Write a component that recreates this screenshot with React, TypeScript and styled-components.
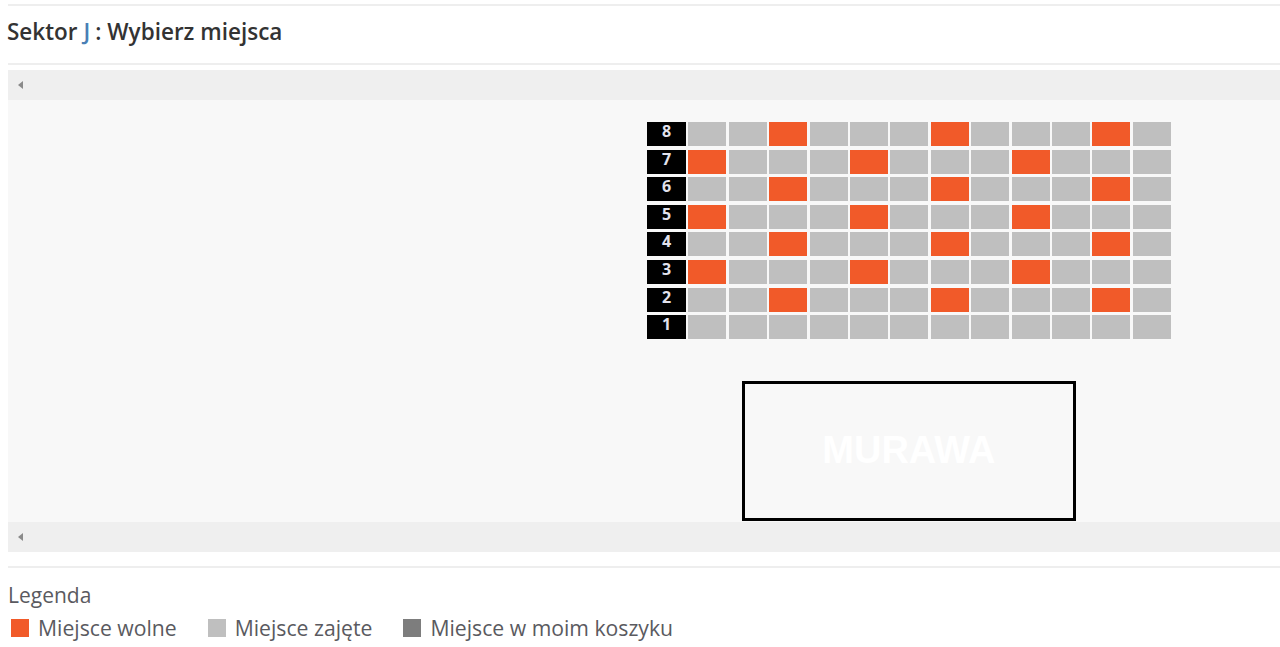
import React from "react";
import styled, { createGlobalStyle } from "styled-components";

const GlobalStyle = createGlobalStyle`
  html, body {
    margin: 0;
    padding: 0;
    background: #ffffff;
    font-family: "Open Sans", "Liberation Sans", sans-serif;
    overflow: hidden;
  }
`;

type SeatKind = "free" | "taken" | "mine";

const seatColors: Record<SeatKind, string> = {
  free: "#f15a29",
  taken: "#bfbfbf",
  mine: "#7d7d7d",
};

const Page = styled.div`
  padding: 4px 0 0 8px;
  width: 1272px;
`;

const Rule = styled.div<{ $gap?: number }>`
  height: 2px;
  background: #eeeeee;
  margin-top: ${(p) => p.$gap ?? 0}px;
`;

const Title = styled.h2`
  margin: 0 0 0 -1px;
  height: 57px;
  box-sizing: border-box;
  padding-bottom: 7px;
  display: flex;
  align-items: center;
  font-size: 22.5px;
  font-weight: 600;
  color: #333333;
`;

const Accent = styled.span`
  color: #4a7fb5;
  margin: 0 5px 0 6px;
`;

const Frame = styled.div`
  margin-top: 5px;
  display: flex;
  flex-direction: column;
`;

const ScrollBar = styled.div`
  height: 30px;
  background: #efefef;
  display: flex;
  align-items: center;
  padding-left: 10px;
`;

const Arrow = styled.span`
  width: 0;
  height: 0;
  border-top: 4px solid transparent;
  border-bottom: 4px solid transparent;
  border-right: 5px solid #8a8a8a;
`;

const Canvas = styled.div`
  height: 422px;
  background: #f8f8f8;
  padding: 22px 0 0 639px;
  box-sizing: border-box;
  overflow: hidden;
`;

const Stage = styled.div`
  display: flex;
  width: fit-content;
  flex-direction: column;
  align-items: center;
`;

const SeatGrid = styled.div`
  display: grid;
  grid-template-columns: 39px repeat(12, 38px);
  grid-auto-rows: 24px;
  column-gap: 2.4px;
  row-gap: 3.6px;
`;

const RowLabel = styled.div`
  background: #000000;
  color: #e2e2ec;
  font-family: "Open Sans", "Liberation Sans", sans-serif;
  font-weight: 700;
  font-size: 16px;
  line-height: 18px;
  text-align: center;
`;

const Seat = styled.div<{ $kind: SeatKind }>`
  background: ${(p) => seatColors[p.$kind]};
`;

const Pitch = styled.div`
  margin-top: 42px;
  width: 334px;
  height: 140px;
  box-sizing: border-box;
  border: 3px solid #000000;
  display: flex;
  align-items: center;
  justify-content: center;
  font-family: "Liberation Sans", Arial, sans-serif;
  font-weight: 700;
  font-size: 38px;
  color: #ffffff;
  padding-bottom: 2px;
`;

const Legend = styled.div`
  padding-top: 14px;
  color: #5a5a60;
`;

const LegendTitle = styled.div`
  font-size: 21px;
  line-height: 26px;
`;

const LegendRow = styled.div`
  display: flex;
  align-items: center;
  gap: 28px;
  margin-top: 7px;
`;

const LegendItem = styled.div`
  display: flex;
  align-items: center;
  gap: 9px;
  font-size: 21.2px;
  line-height: 26px;
`;

const Swatch = styled.span<{ $kind: SeatKind }>`
  width: 18px;
  height: 18px;
  margin-left: 3px;
  background: ${(p) => seatColors[p.$kind]};
`;

const rows = [8, 7, 6, 5, 4, 3, 2, 1];

const seatKind = (row: number, col: number): SeatKind => {
  if (row === 1) return "taken";
  if (row % 2 === 0) return col % 4 === 3 ? "free" : "taken";
  return col % 4 === 1 ? "free" : "taken";
};

export default function App() {
  return (
    <>
      <GlobalStyle />
      <Page>
        <Rule />
        <Title>
          Sektor<Accent>J</Accent>: Wybierz miejsca
        </Title>
        <Rule />
        <Frame>
          <ScrollBar>
            <Arrow />
          </ScrollBar>
          <Canvas>
            <Stage>
              <SeatGrid>
                {rows.map((row) => (
                  <React.Fragment key={row}>
                    <RowLabel>{row}</RowLabel>
                    {Array.from({ length: 12 }, (_, i) => (
                      <Seat key={i} $kind={seatKind(row, i + 1)} />
                    ))}
                  </React.Fragment>
                ))}
              </SeatGrid>
              <Pitch>MURAWA</Pitch>
            </Stage>
          </Canvas>
          <ScrollBar>
            <Arrow />
          </ScrollBar>
        </Frame>
        <Rule $gap={14} />
        <Legend>
          <LegendTitle>Legenda</LegendTitle>
          <LegendRow>
            <LegendItem>
              <Swatch $kind="free" />
              Miejsce wolne
            </LegendItem>
            <LegendItem>
              <Swatch $kind="taken" />
              Miejsce zajęte
            </LegendItem>
            <LegendItem>
              <Swatch $kind="mine" />
              Miejsce w moim koszyku
            </LegendItem>
          </LegendRow>
        </Legend>
      </Page>
    </>
  );
}
